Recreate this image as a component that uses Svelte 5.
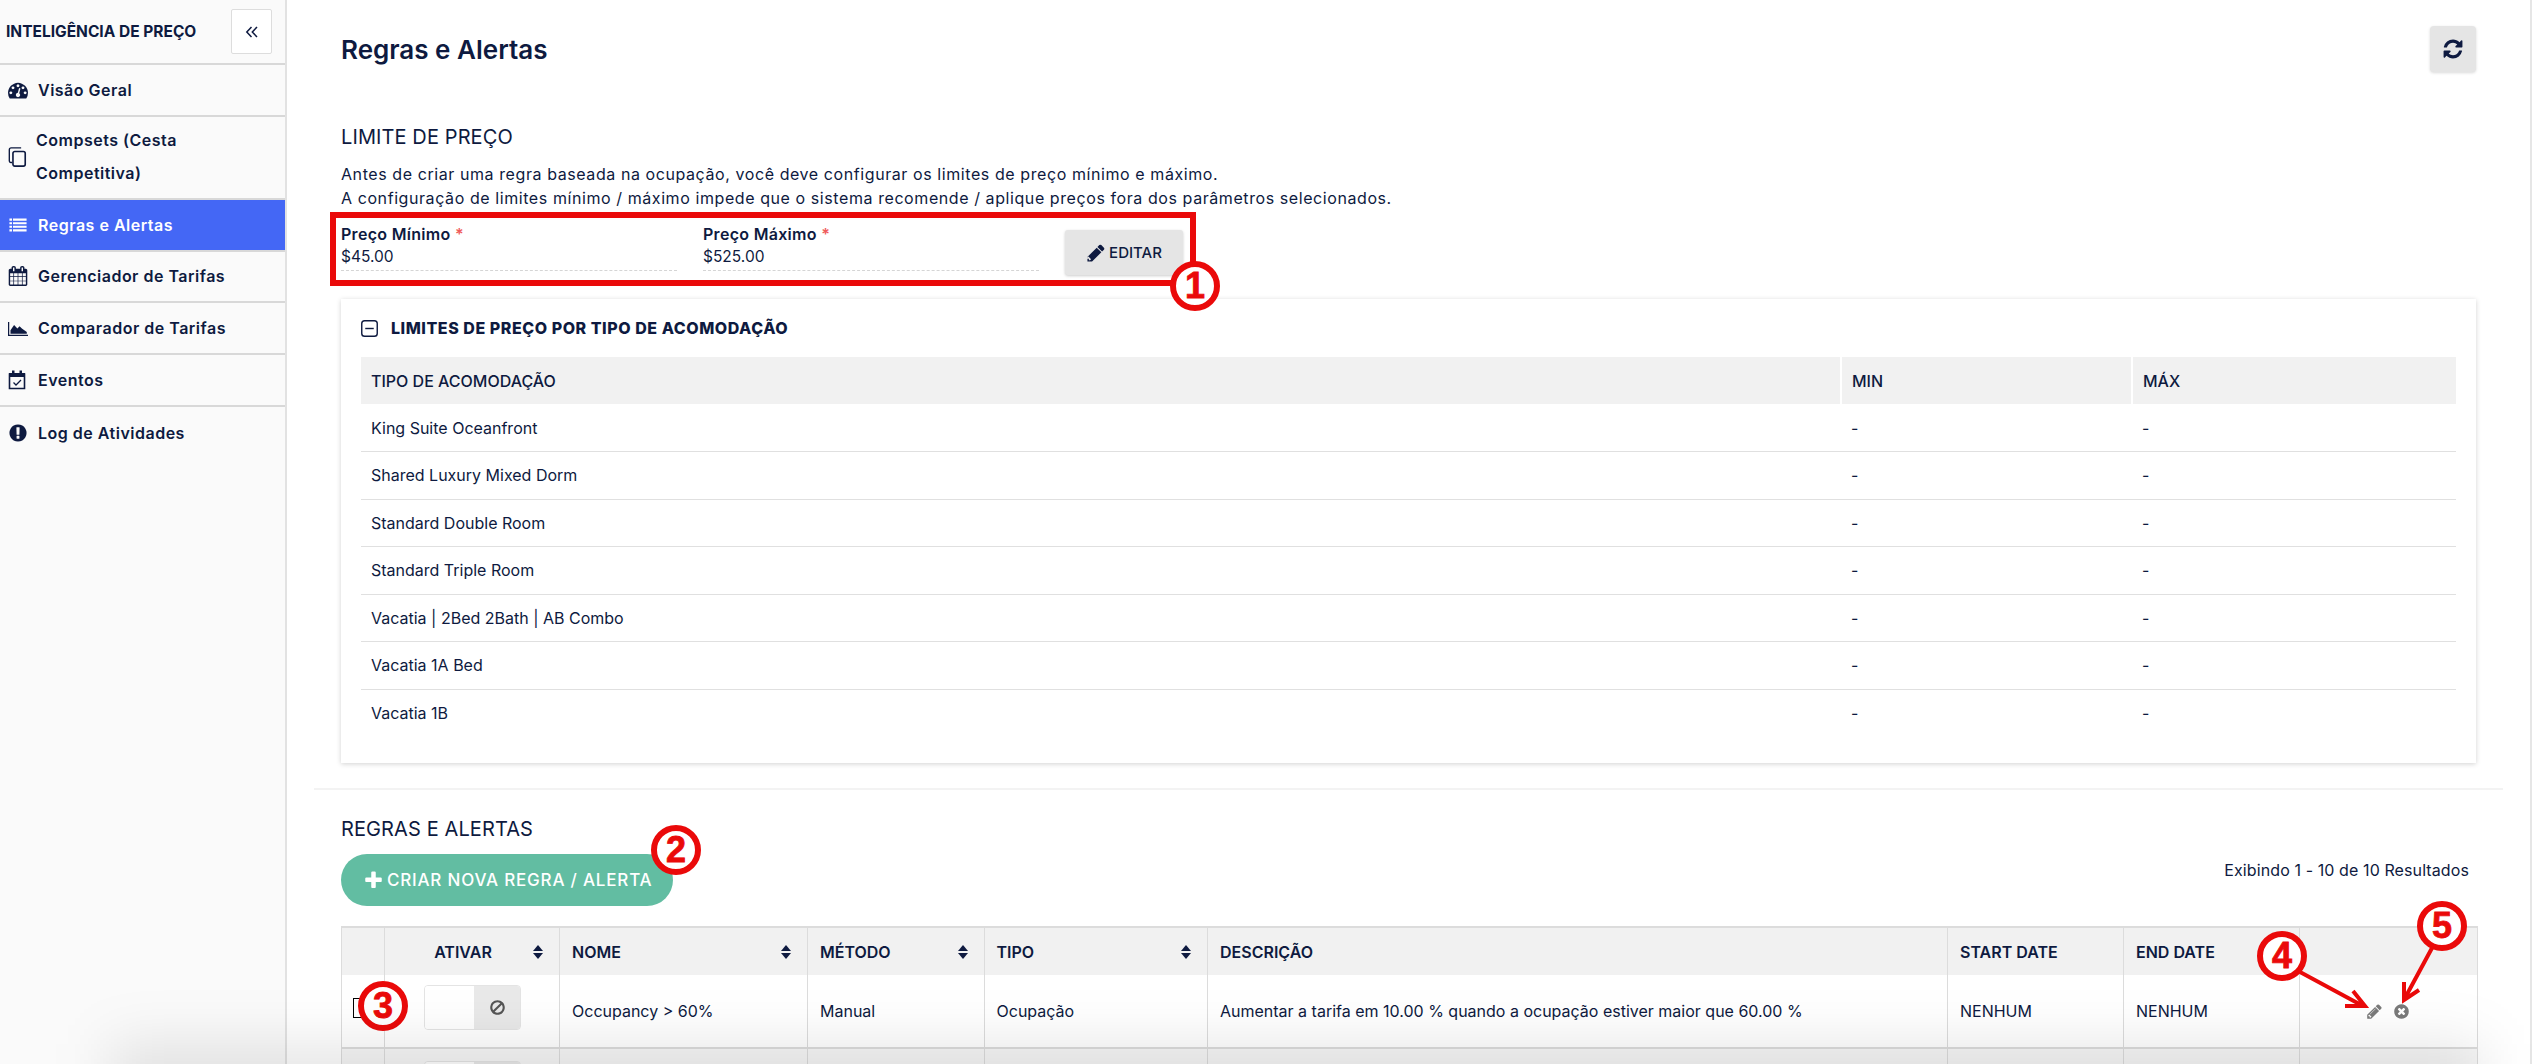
<script>
  const nav = [
    { label: 'Visão Geral', icon: 'gauge' },
    { label: 'Compsets (Cesta Competitiva)', icon: 'copy', tall: true },
    { label: 'Regras e Alertas', icon: 'list', active: true },
    { label: 'Gerenciador de Tarifas', icon: 'calendar' },
    { label: 'Comparador de Tarifas', icon: 'chart' },
    { label: 'Eventos', icon: 'check' },
    { label: 'Log de Atividades', icon: 'alert' }
  ];
  const paths = {
    gauge: 'M384 1152q0-53-37.5-90.5t-90.5-37.5-90.5 37.5-37.5 90.5 37.5 90.5 90.5 37.5 90.5-37.5 37.5-90.5zm192-448q0-53-37.5-90.5t-90.5-37.5-90.5 37.5-37.5 90.5 37.5 90.5 90.5 37.5 90.5-37.5 37.5-90.5zm428 481l101-382q6-26-7.5-48.5t-38.5-29.5-48 6.5-30 39.5l-101 382q-60 5-107 43.5t-63 98.5q-20 77 20 146t117 89 146-20 89-117q16-60-6-117t-72-91zm660-33q0-53-37.5-90.5t-90.5-37.5-90.5 37.5-37.5 90.5 37.5 90.5 90.5 37.5 90.5-37.5 37.5-90.5zm-640-640q0-53-37.5-90.5t-90.5-37.5-90.5 37.5-37.5 90.5 37.5 90.5 90.5 37.5 90.5-37.5 37.5-90.5zm448 192q0-53-37.5-90.5t-90.5-37.5-90.5 37.5-37.5 90.5 37.5 90.5 90.5 37.5 90.5-37.5 37.5-90.5zm320 448q0 261-141 483-19 29-54 29h-1402q-35 0-54-29-141-221-141-483 0-182 71-348t191-286 286-191 348-71 348 71 286 191 191 286 71 348z',
    calendar: 'M192 1664h288v-288h-288v288zm352 0h320v-288h-320v288zm-352-352h288v-320h-288v320zm352 0h320v-320h-320v320zm-352-384h288v-288h-288v288zm736 736h320v-288h-320v288zm-384-736h320v-288h-320v288zm768 736h288v-288h-288v288zm-384-352h320v-320h-320v320zm-352-864v-288q0-13-9.5-22.5t-22.5-9.5h-64q-13 0-22.5 9.5t-9.5 22.5v288q0 13 9.5 22.5t22.5 9.5h64q13 0 22.5-9.5t9.5-22.5zm736 864h288v-320h-288v320zm-384-384h320v-288h-320v288zm384 0h288v-288h-288v288zm32-480v-288q0-13-9.5-22.5t-22.5-9.5h-64q-13 0-22.5 9.5t-9.5 22.5v288q0 13 9.5 22.5t22.5 9.5h64q13 0 22.5-9.5t9.5-22.5zm384-64v1280q0 52-38 90t-90 38h-1408q-52 0-90-38t-38-90v-1280q0-52 38-90t90-38h128v-96q0-66 47-113t113-47h64q66 0 113 47t47 113v96h384v-96q0-66 47-113t113-47h64q66 0 113 47t47 113v96h128q52 0 90 38t38 90z',
    alert: 'M896 128q209 0 385.5 103t279.5 279.5 103 385.5-103 385.5-279.5 279.5-385.5 103-385.5-103-279.5-279.5-103-385.5 103-385.5 279.5-279.5 385.5-103zm128 1247v-190q0-14-9-23.5t-22-9.5h-192q-13 0-23 10t-10 23v190q0 13 10 23t23 10h192q13 0 22-9.5t9-23.5zm-2-344l18-621q0-12-10-18-10-8-24-8h-220q-14 0-24 8-10 6-10 18l17 621q0 10 10 17.5t24 7.5h185q14 0 23.5-7.5t10.5-17.5z',
    pencil: 'M491 1536l91-91-235-235-91 91v107h128v128h107zm523-928q0-22-22-22-10 0-17 7l-542 542q-7 7-7 17 0 22 22 22 10 0 17-7l542-542q7-7 7-17zm-54-192l416 416-832 832h-416v-416zm683 96q0 53-37 90l-166 166-416-416 166-165q36-38 90-38 53 0 91 38l235 234q37 39 37 91z',
    solidPencil: 'M363 1536l91-91-235-235-91 91v107h128v128h107zM960 416l416 416-832 832h-416v-416zm683 96q0 53-37 90l-166 166-416-416 166-165q36-38 90-38 53 0 91 38l235 234q37 39 37 91z',
    refresh: 'M1639 1056q0 5-1 7-64 268-268 434.5t-478 166.5q-146 0-282.5-55t-243.5-157l-129 129q-19 19-45 19t-45-19-19-45v-448q0-26 19-45t45-19h448q26 0 45 19t19 45-19 45l-137 137q71 66 161 102t187 36q134 0 250-65t186-179q11-17 53-117 8-23 30-23h192q13 0 22.5 9.5t9.5 22.5zm25-800v448q0 26-19 45t-45 19h-448q-26 0-45-19t-19-45 19-45l138-138q-148-137-349-137-134 0-250 65t-186 179q-11 17-53 117-8 23-30 23h-199q-13 0-22.5-9.5t-9.5-22.5v-7q65-268 270-434.5t480-166.5q146 0 284 55.5t245 156.5l130-129q19-19 45-19t45 19 19 45z',
    plus: 'M1600 736v192q0 40-28 68t-68 28h-416v416q0 40-28 68t-68 28h-192q-40 0-68-28t-28-68v-416h-416q-40 0-68-28t-28-68v-192q0-40 28-68t68-28h416v-416q0-40 28-68t68-28h192q40 0 68 28t28 68v416h416q40 0 68 28t28 68z',
    times: 'M1277 1122q0-26-19-45l-181-181 181-181q19-19 19-45 0-27-19-46l-90-90q-19-19-46-19-26 0-45 19l-181 181-181-181q-19-19-45-19-27 0-46 19l-90 90q-19 19-19 46 0 26 19 45l181 181-181 181q-19 19-19 45 0 27 19 46l90 90q19 19 46 19 26 0 45-19l181-181 181 181q19 19 45 19 27 0 46-19l90-90q19-19 19-46zm387-226q0 209-103 385.5t-279.5 279.5-385.5 103-385.5-103-279.5-279.5-103-385.5 103-385.5 279.5-279.5 385.5-103 385.5 103 279.5 279.5 103 385.5z',
    ban: 'M1440 893q0-161-87-295l-754 753q137 89 297 89 111 0 211.5-43.5t173.5-116.5 116-174.5 43-212.5zm-999 299l755-754q-135-91-300-91-148 0-273 73t-198 199-73 274q0 162 89 299zm1223-299q0 157-61 300t-163.5 246-245 164-298.5 61-298.5-61-245-164-163.5-246-61-300 61-299.5 163.5-245.5 245-164 298.5-61 298.5 61 245 164 163.5 245.5 61 299.5z',
    chart: 'M0 352h110v1152h1682v110H0zM224 1420v-330l320-470 300 330 190-210 210 200 440 320v160z',
    list: 'M128 320h230v192h-230zM448 320h1216v192h-1216zM128 640h230v192h-230zM448 640h1216v192h-1216zM128 960h230v192h-230zM448 960h1216v192h-1216zM128 1280h230v192h-230zM448 1280h1216v192h-1216z'
  };
  const acomod = ['King Suite Oceanfront', 'Shared Luxury Mixed Dorm', 'Standard Double Room', 'Standard Triple Room', 'Vacatia | 2Bed 2Bath | AB Combo', 'Vacatia 1A Bed', 'Vacatia 1B'];
</script>

<div class="page">
  <aside class="side">
    <div class="brand">
      <span>INTELIGÊNCIA DE PREÇO</span>
      <button class="collapse" aria-label="Recolher">
        <svg viewBox="0 0 16 16" width="16" height="16"><path d="M7.500 3 2.800 8l4.700 5M13 3 8.300 8l4.700 5" fill="none" stroke="#0e1a40" stroke-width="1.500"/></svg>
      </button>
    </div>
    {#each nav as n}
      <div class="item" class:active={n.active} class:tall={n.tall}>
        <span class="ico">
          {#if n.icon === 'copy'}
            <svg viewBox="0 0 20 22" width="19" height="20"><path d="M4 17H2.500A1.500 1.500 0 0 1 1 15.500V3A2 2 0 0 1 3 1h11" fill="none" stroke="currentColor" stroke-width="1.500"/><rect x="5" y="5" width="13.500" height="16" rx="2" fill="none" stroke="currentColor" stroke-width="1.800"/></svg>
          {:else if n.icon === 'check'}
            <svg viewBox="0 0 18 20" width="18" height="20"><path d="M1.500 4h15v14.500h-15z" fill="none" stroke="currentColor" stroke-width="1.600"/><path d="M1 3h16v4H1zM4 .5h2.500v4H4zM11.500.5H14v4h-2.500z" fill="currentColor"/><path d="m5.500 12.500 2.500 2.500 5-5" fill="none" stroke="currentColor" stroke-width="1.300"/></svg>
          {:else}
            <svg viewBox="0 0 1792 1792" width="20" height="20"><path d={paths[n.icon]} fill="currentColor"/></svg>
          {/if}
        </span>
        <span class="lbl">{n.label}</span>
      </div>
    {/each}
  </aside>

  <main class="main">
    <header class="top">
      <h1>Regras e Alertas</h1>
      <button class="refresh" aria-label="Atualizar">
        <svg viewBox="0 0 1792 1792" width="22" height="22"><path d={paths.refresh} fill="#0e1a40"/></svg>
      </button>
    </header>

    <section class="limits">
      <h2>LIMITE DE PREÇO</h2>
      <p>Antes de criar uma regra baseada na ocupação, você deve configurar os limites de preço mínimo e máximo.</p>
      <p>A configuração de limites mínimo / máximo impede que o sistema recomende / aplique preços fora dos parâmetros selecionados.</p>
      <div class="pricebox">
        <div class="field"><div class="flabel">Preço Mínimo <i>*</i></div><div class="fval">$45.00</div></div>
        <div class="field"><div class="flabel">Preço Máximo <i>*</i></div><div class="fval">$525.00</div></div>
        <button class="edit">
          <svg viewBox="0 0 1792 1792" width="20" height="20"><path d={paths.solidPencil} fill="#0e1a40"/></svg>EDITAR
        </button>
        <span class="badge b1">1</span>
      </div>

      <div class="card">
        <div class="cardhead">
          <svg viewBox="0 0 18 18" width="17" height="17"><rect x=".8" y=".8" width="16.400" height="16.400" rx="3" fill="none" stroke="#0e1a40" stroke-width="1.500"/><path d="M4.500 9h9" stroke="#0e1a40" stroke-width="1.500"/></svg>
          <strong>LIMITES DE PREÇO POR TIPO DE ACOMODAÇÃO</strong>
        </div>
        <table class="lim">
          <thead><tr><th>TIPO DE ACOMODAÇÃO</th><th class="cmin">MIN</th><th class="cmax">MÁX</th></tr></thead>
          <tbody>
            {#each acomod as a}
              <tr><td>{a}</td><td>-</td><td>-</td></tr>
            {/each}
          </tbody>
        </table>
      </div>
    </section>

    <section class="rules">
      <h2>REGRAS E ALERTAS</h2>
      <div class="rulebar">
        <button class="create">
          <svg viewBox="0 0 1792 1792" width="21" height="21"><path d={paths.plus} fill="#fff"/></svg>CRIAR NOVA REGRA / ALERTA
          <span class="badge b2">2</span>
        </button>
        <span class="count">Exibindo 1 - 10 de 10 Resultados</span>
      </div>
      <table class="rtable">
        <thead>
          <tr>
            <th class="c0"></th>
            <th class="c1"><span class="ctr">ATIVAR</span><span class="sort"></span></th>
            <th class="c2">NOME<span class="sort"></span></th>
            <th class="c3">MÉTODO<span class="sort"></span></th>
            <th class="c4">TIPO<span class="sort"></span></th>
            <th class="c5">DESCRIÇÃO</th>
            <th class="c6">START DATE</th>
            <th class="c7">END DATE</th>
            <th class="c8"></th>
          </tr>
        </thead>
        <tbody>
          <tr>
            <td class="cc"><span class="chk"></span></td>
            <td class="tc">
              <span class="toggle"><span class="on"></span><span class="off"><svg viewBox="0 0 1792 1792" width="17" height="17"><path d={paths.ban} fill="#555"/></svg></span></span>
            </td>
            <td>Occupancy &gt; 60%</td>
            <td>Manual</td>
            <td>Ocupação</td>
            <td>Aumentar a tarifa em 10.00 % quando a ocupação estiver maior que 60.00 %</td>
            <td>NENHUM</td>
            <td>NENHUM</td>
            <td>
              <div class="acts">
                <svg viewBox="0 0 1792 1792" width="17" height="17"><path d={paths.pencil} fill="#7a7a7a"/></svg>
                <svg viewBox="0 0 1792 1792" width="17" height="17"><path d={paths.times} fill="#7a7a7a"/></svg>
              </div>
            </td>
          </tr>
          <tr class="r2">
            <td></td>
            <td class="tc"><span class="toggle"><span class="on"></span><span class="off"></span></span></td>
            <td></td><td></td><td></td><td></td><td></td><td></td><td></td>
          </tr>
        </tbody>
      </table>
    </section>
  </main>

  <span class="badge b3">3</span>
  <span class="badge b4">4</span>
  <span class="badge b5">5</span>
  <svg class="arrows" width="2532" height="1064" viewBox="0 0 2532 1064">
    <path d="M2300 972 2363 1006M2345 1006h20l-12-15M2432 948 2405 998M2404 982v18l15-10" fill="none" stroke="#ea0a0a" stroke-width="4"/>
  </svg>
  <div class="fade"></div>
</div>

<style>
  :global(body) { margin: 0; background: #fff; }
  .page {
    position: relative; display: flex; width: 2532px; height: 1064px; overflow: hidden;
    color: #0e1a40; font-family: Inter, "Liberation Sans", sans-serif;
  }
  .side { width: 287px; flex: none; background: #fafafa; border-right: 2px solid #e2e2e2; box-sizing: border-box; }
  .brand {
    display: flex; align-items: center; justify-content: space-between;
    height: 65px; box-sizing: border-box; padding: 0 13px 0 6px;
    border-bottom: 2px solid #d8d8d8; font-size: 15.500px; font-weight: 700;
  }
  .collapse {
    display: flex; align-items: center; justify-content: center; width: 41px; height: 45px;
    background: #fff; border: 1px solid #ddd; border-radius: 2px; padding: 0;
  }
  .item {
    display: flex; align-items: center; height: 51.800px; box-sizing: border-box; padding-left: 8px;
    border-bottom: 2px solid #d8d8d8; font-size: 16px; font-weight: 600; letter-spacing: .5px;
  }
  .item:last-child { border-bottom: 0; }
  .item.tall { height: 83px; }
  .item.tall .lbl { padding-right: 70px; line-height: 33px; margin-left: -2px; }
  .item.active { background: #4467f5; color: #fff; }
  .ico { width: 20px; height: 20px; margin-right: 10px; flex: none; display: flex; }
  .main { flex: 1; box-sizing: border-box; padding: 0 27px; margin-right: 2px; min-width: 0; position: relative; }
  .main::after { content: ''; position: absolute; top: 0; bottom: 0; right: -2px; width: 2px; background: #e6e6e6; }
  .top { display: flex; justify-content: space-between; align-items: center; padding: 26px 27px 0; height: 46px; }
  h1 { margin: 0; font-size: 26px; font-weight: 600; color: #0e1a40; }
  .refresh {
    display: flex; align-items: center; justify-content: center; width: 46px; height: 46px; padding: 0;
    background: #e5e5e5; border: 0; border-radius: 4px; box-shadow: 0 1px 3px rgba(0,0,0,.15);
  }
  .limits { padding: 51px 27px 0; border-bottom: 2px solid #f3f3f3; height: 718px; box-sizing: border-box; }
  h2 { margin: 0; font-size: 20px; font-weight: 400; line-height: 28px; letter-spacing: .1px; }
  .limits p { margin: 0; font-size: 16px; line-height: 24px; font-weight: 400; letter-spacing: .58px; }
  .limits h2 { margin-bottom: 11px; }
  .pricebox {
    position: relative; display: flex; align-items: flex-start; padding: 0 0 0 5px;
    width: 866px; height: 74px; box-sizing: border-box; border: 6px solid #ea0a0a; margin: 2px 0 0 -11px;
  }
  .field { width: 336px; margin-right: 26px; padding-top: 4px; height: 53px; border-bottom: 1px dashed #d5d5d5; box-sizing: border-box; }
  .flabel { font-size: 16px; font-weight: 600; line-height: 24px; height: 24px; letter-spacing: .3px; white-space: nowrap; }
  .flabel i { color: #ef5b5b; font-style: normal; }
  .fval { font-size: 15.500px; line-height: 22px; }
  .edit {
    display: flex; align-items: center; gap: 3px; justify-content: center;
    width: 118px; height: 45px; margin-top: 12px; padding: 0; border: 0; border-radius: 3px;
    background: #e5e5e5; color: #0e1a40; font: 500 15px Inter, sans-serif; box-shadow: 0 1px 3px rgba(0,0,0,.2);
  }
  .card {
    margin-top: 13px; height: 464px; box-sizing: border-box; padding: 0 20px;
    background: #fff; box-shadow: 0 1px 5px rgba(0,0,0,.18);
  }
  .cardhead { display: flex; align-items: center; gap: 13px; height: 58px; font-size: 16px; }
  .cardhead strong { font-weight: 800; letter-spacing: .55px; }
  .lim { width: 100%; border-collapse: collapse; table-layout: fixed; font-size: 16px; }
  .lim th { background: #f1f1f1; text-align: left; height: 47px; padding: 0 10px; font-weight: 500; box-sizing: border-box; }
  .lim td { height: 47.500px; padding: 0 10px; border-bottom: 1px solid #e0e0e0; box-sizing: border-box; }
  .lim tr:last-child td { border-bottom: 0; }
  .lim .cmin { width: 291px; border-left: 2px solid #fff; }
  .lim .cmax { width: 324px; border-left: 2px solid #fff; }
  .rules { padding: 25px 27px 0; }
  .rulebar { display: flex; align-items: flex-start; justify-content: space-between; margin-top: 11px; }
  .create {
    position: relative; display: flex; align-items: center; gap: 3px;
    width: 332px; height: 52px; padding: 0 0 0 22px; border: 0; border-radius: 26px;
    background: #62bda2; color: #fff; font: 500 17px Inter, sans-serif; letter-spacing: .8px;
  }
  .count { font-size: 16px; margin-top: 6px; margin-right: 7px; letter-spacing: .1px; }
  .rtable { margin-top: 20px; width: 2136px; border-collapse: collapse; table-layout: fixed; font-size: 16px; }
  .rtable th, .rtable td { border: 1px solid #dcdcdc; padding: 0 12px; text-align: left; box-sizing: border-box; }
  .rtable thead th { border-top: 2px solid #dcdcdc; border-bottom: 0; }
  .rtable tbody tr:first-child td { border-top: 0; border-bottom: 2px solid #dcdcdc; }
  .rtable th { background: #f1f1f1; height: 48px; position: relative; font-weight: 600; }
  .rtable td { height: 73px; }
  .r2 td { background: #f7f7f7; }
  .rtable .c1 { padding: 0 18px 0 0; }
  .ctr { display: block; text-align: center; }
  .sort { position: absolute; right: 16px; top: 17px; width: 10px; height: 14px; }
  .sort::before, .sort::after {
    content: ''; position: absolute; left: 0; width: 0; height: 0;
    border-left: 5px solid transparent; border-right: 5px solid transparent;
  }
  .sort::before { top: 0; border-bottom: 6px solid #0e1a40; }
  .sort::after { bottom: 0; border-top: 6px solid #0e1a40; }
  .c0 { width: 43px; } .c1 { width: 175px; } .c2 { width: 248px; } .c3 { width: 176.500px; }
  .c4 { width: 223.500px; } .c5 { width: 740px; } .c6 { width: 176px; } .c7 { width: 176px; } .c8 { width: 178px; }
  .rtable .cc { padding: 0 0 0 11px; }
  .chk { display: block; width: 20px; height: 20px; margin-top: -7px; border: 1px solid #000; box-sizing: border-box; background: #fff; }
  .rtable .tc { padding: 10px 0 0 39px; vertical-align: top; }
  .r2 .tc { padding-top: 12px; }
  .toggle { display: flex; width: 97px; height: 45px; border: 1px solid #e4e4e4; border-radius: 4px; box-sizing: border-box; overflow: hidden; }
  .on { width: 49px; background: #fff; }
  .off { flex: 1; background: #e9e9e9; display: flex; align-items: center; justify-content: center; }
  .acts { display: flex; gap: 10px; padding-left: 54px; }
  .badge {
    position: absolute; z-index: 3; width: 50px; height: 50px; box-sizing: border-box; border: 6px solid #ea0a0a; border-radius: 50%;
    background: #fff; color: #ea0a0a; font: 700 36px/37px "Liberation Sans", sans-serif; text-align: center;
    letter-spacing: 0; -webkit-text-stroke: .8px #ea0a0a;
  }
  .b1 { left: 834px; top: 43px; }
  .b2 { left: 310px; top: -29px; }
  .b3 { left: 358px; top: 981px; }
  .b4 { left: 2257px; top: 931px; }
  .b5 { left: 2417px; top: 901px; }
  .arrows { position: absolute; left: 0; top: 0; z-index: 2; pointer-events: none; }
  .fade {
    position: absolute; left: 110px; right: 50px; bottom: -50px; height: 70px; z-index: 4; pointer-events: none;
    background: rgba(0,0,0,.1); filter: blur(28px);
  }
</style>
